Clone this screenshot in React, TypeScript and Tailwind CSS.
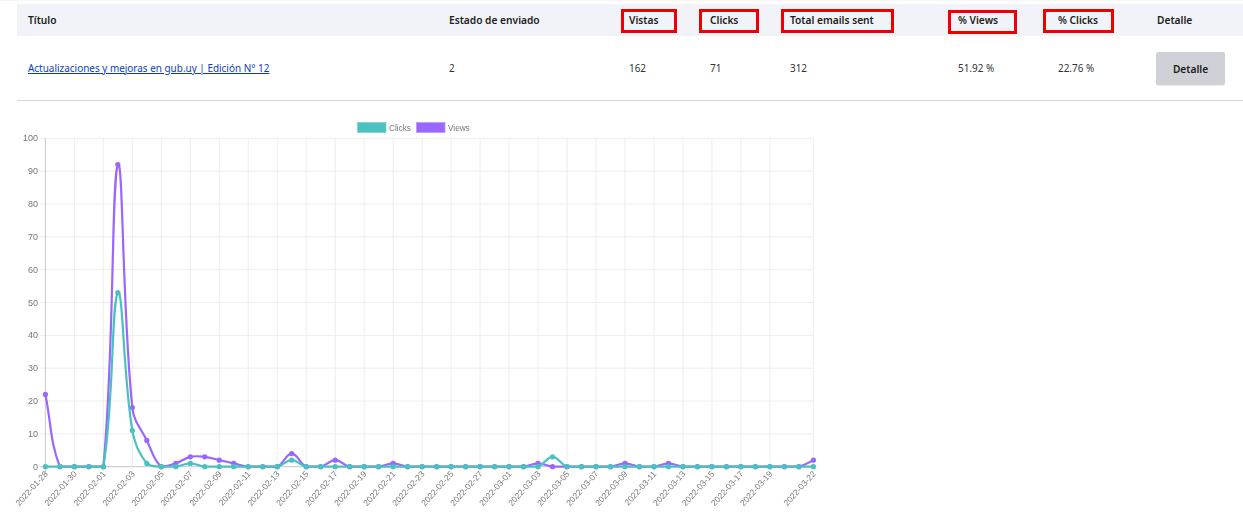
import React from "react";

const fontStack = { fontFamily: '"Noto Sans", "Liberation Sans", sans-serif' };

const dates = (() => {
  const out: string[] = [];
  const d = new Date(Date.UTC(2022, 0, 28));
  for (let i = 0; i < 54; i++) {
    out.push(d.toISOString().slice(0, 10));
    d.setUTCDate(d.getUTCDate() + 1);
  }
  return out;
})();

const viewsMap: Record<number, number> = { 0: 22, 5: 92, 6: 18, 7: 8, 9: 1, 10: 3, 11: 3, 12: 2, 13: 1, 17: 4, 20: 2, 24: 1, 34: 1, 40: 1, 43: 1, 53: 2 };
const clicksMap: Record<number, number> = { 5: 53, 6: 11, 7: 1, 10: 1, 17: 2, 35: 3 };

const X0 = 45.4;
const DX = 14.49;
const Y0 = 356.7; // y of value 0 inside the svg
const YS = 3.284;
const TOP = Y0 - 100 * YS;
const RIGHT = X0 + 53 * DX;
const px = (i: number) => X0 + i * DX;
const py = (v: number) => Y0 - v * YS;

function curve(map: Record<number, number>) {
  const pts = dates.map((_, i) => ({ x: px(i), y: py(map[i] ?? 0) }));
  const t = 0.4;
  const cps = pts.map((c, i) => {
    const p = pts[Math.max(0, i - 1)];
    const n = pts[Math.min(pts.length - 1, i + 1)];
    const d01 = Math.hypot(c.x - p.x, c.y - p.y);
    const d12 = Math.hypot(n.x - c.x, n.y - c.y);
    const sum = d01 + d12 || 1;
    const fa = (t * d01) / sum;
    const fb = (t * d12) / sum;
    const cap = (v: number) => Math.min(Y0, Math.max(TOP, v));
    return {
      px: c.x - fa * (n.x - p.x),
      py: cap(c.y - fa * (n.y - p.y)),
      nx: c.x + fb * (n.x - p.x),
      ny: cap(c.y + fb * (n.y - p.y)),
    };
  });
  let d = `M${pts[0].x} ${pts[0].y}`;
  for (let i = 1; i < pts.length; i++) {
    d += `C${cps[i - 1].nx} ${cps[i - 1].ny} ${cps[i].px} ${cps[i].py} ${pts[i].x} ${pts[i].y}`;
  }
  return { d, pts };
}

const views = curve(viewsMap);
const clicks = curve(clicksMap);
const tickIdx = [...Array.from({ length: 26 }, (_, i) => i * 2), 53];
const yTicks = [0, 10, 20, 30, 40, 50, 60, 70, 80, 90, 100];

function Chart() {
  return (
    <svg width="830" height="411" className="block blur-[0.3px]" style={{ fontFamily: '"Liberation Sans", sans-serif' }}>
      <rect x="357.5" y="12.5" width="28.5" height="10" fill="#4bc0c0" stroke="#7fd3d3" strokeWidth="0.75" />
      <text x="389" y="20.5" fontSize="8.2" fill="#777">Clicks</text>
      <rect x="416.5" y="12.5" width="28.5" height="10" fill="#9966ff" stroke="#b999ff" strokeWidth="0.75" />
      <text x="448" y="20.5" fontSize="8.2" fill="#777">Views</text>

      {yTicks.map((v) => (
        <g key={v}>
          <line x1="40" x2={RIGHT} y1={py(v)} y2={py(v)} stroke={v === 0 ? "#bdbdbd" : "#ebebeb"} strokeWidth="0.9" />
          <text x="38" y={py(v) + 3} fontSize="9" fill="#777" textAnchor="end">{v}</text>
        </g>
      ))}
      {tickIdx.map((i) => (
        <g key={i}>
          <line x1={px(i)} x2={px(i)} y1={TOP} y2={Y0 + 6} stroke={i === 0 ? "#c4c4c4" : "#ebebeb"} strokeWidth="0.9" />
          <text
            x={px(i) + 3}
            y={Y0 + 7.5}
            fontSize="8.5"
            fill="#777"
            textAnchor="end"
            transform={`rotate(-48 ${px(i) + 3} ${Y0 + 7.5})`}
          >
            {dates[i]}
          </text>
        </g>
      ))}

      <path d={views.d} fill="none" stroke="#9966ff" strokeWidth="2.2" />
      {views.pts.map((p, i) => (
        <circle key={i} cx={p.x} cy={p.y} r="2.6" fill="#9966ff" />
      ))}
      <path d={clicks.d} fill="none" stroke="#4bc0c0" strokeWidth="2.2" />
      {clicks.pts.map((p, i) => (
        <circle key={i} cx={p.x} cy={p.y} r="2.6" fill="#4bc0c0" />
      ))}
    </svg>
  );
}

function Th({ children, box }: { children: React.ReactNode; box?: string }) {
  return (
    <th className="relative px-[11px] h-8 p-0 text-left text-[10.2px] font-semibold text-[#1a1d20]">
      {children}
      {box ? <span className={`absolute h-[24px] border-[3px] border-[#ee0000] ${box}`} /> : null}
    </th>
  );
}

function Td({ children }: { children: React.ReactNode }) {
  return <td className="px-[11px] text-left text-[#333]">{children}</td>;
}

export default function App() {
  return (
    <div className="w-[1243px] h-[521px] overflow-hidden bg-white border-t border-[#f4f4f4] pt-[3px]" style={fontStack}>
      <div className="pl-[17px]">
        <table className="w-[1226px] table-fixed border-collapse text-[9.95px] leading-4">
          <colgroup>
            <col className="w-[421px]" />
            <col className="w-[180px]" />
            <col className="w-[81px]" />
            <col className="w-[80px]" />
            <col className="w-[168px]" />
            <col className="w-[100px]" />
            <col className="w-[99px]" />
            <col className="w-[97px]" />
          </colgroup>
          <thead className="bg-[#f2f3f8]">
            <tr>
              <Th>Título</Th>
              <Th>Estado de enviado</Th>
              <Th box="top-[5px] left-[3px] w-[56px]">Vistas</Th>
              <Th box="top-[5px] left-0 w-[60px]">Clicks</Th>
              <Th box="top-[5px] left-[2px] w-[113px]">Total emails sent</Th>
              <Th box="top-[6px] left-px w-[69px]">% Views</Th>
              <Th box="top-[5px] left-[-4px] w-[71px]">% Clicks</Th>
              <Th>Detalle</Th>
            </tr>
          </thead>
          <tbody>
            <tr className="h-[64px] border-b border-[#d8d8de]">
              <td className="px-[11px] text-left">
                <a href="#" className="text-[#0b3bc4] underline">Actualizaciones y mejoras en gub.uy | Edición N° 12</a>
              </td>
              <Td>2</Td>
              <Td>162</Td>
              <Td>71</Td>
              <Td>312</Td>
              <Td>51.92 %</Td>
              <Td>22.76 %</Td>
              <td className="px-[10px]">
                <button className="block w-[69px] h-[33px] mt-[2px] rounded-[2px] bg-[#d0d1d6] text-[10.2px] font-semibold text-[#1a1d20] shadow-[0_1px_1px_rgba(0,0,0,0.08)]">Detalle</button>
              </td>
            </tr>
          </tbody>
        </table>
      </div>
      <div className="mt-[9px]">
        <Chart />
      </div>
    </div>
  );
}
